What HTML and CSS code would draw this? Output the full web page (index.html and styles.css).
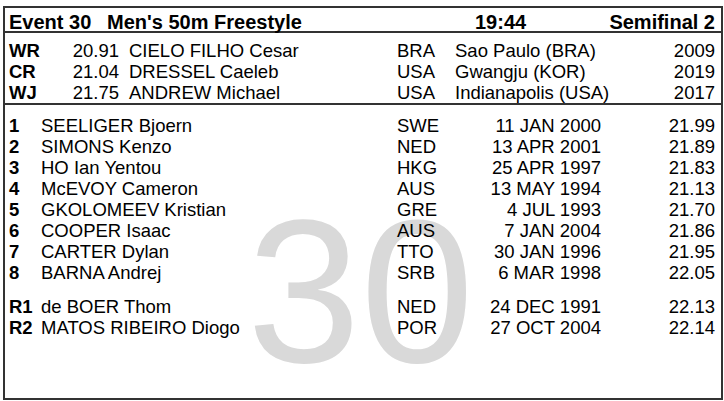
FILE: index.html
```html
<!DOCTYPE html>
<html>
<head>
<meta charset="utf-8">
<link rel="stylesheet" href="styles.css">
</head>
<body>
<div class="sheet">
  <div class="watermark">30</div>
  <div class="header">
    <div>Event 30</div>
    <div>Men's 50m Freestyle</div>
    <div>19:44</div>
    <div class="right">Semifinal 2</div>
  </div>
  <div class="records">
    <div class="rec"><b>WR</b><span class="right">20.91</span><span class="name">CIELO FILHO Cesar</span><span>BRA</span><span>Sao Paulo (BRA)</span><span class="right">2009</span></div>
    <div class="rec"><b>CR</b><span class="right">21.04</span><span class="name">DRESSEL Caeleb</span><span>USA</span><span>Gwangju (KOR)</span><span class="right">2019</span></div>
    <div class="rec"><b>WJ</b><span class="right">21.75</span><span class="name">ANDREW Michael</span><span>USA</span><span>Indianapolis (USA)</span><span class="right">2017</span></div>
  </div>
  <div class="results">
    <div class="res"><b>1</b><span>SEELIGER Bjoern</span><span>SWE</span><span class="right">11 JAN 2000</span><span class="right">21.99</span></div>
    <div class="res"><b>2</b><span>SIMONS Kenzo</span><span>NED</span><span class="right">13 APR 2001</span><span class="right">21.89</span></div>
    <div class="res"><b>3</b><span>HO Ian Yentou</span><span>HKG</span><span class="right">25 APR 1997</span><span class="right">21.83</span></div>
    <div class="res"><b>4</b><span>McEVOY Cameron</span><span>AUS</span><span class="right">13 MAY 1994</span><span class="right">21.13</span></div>
    <div class="res"><b>5</b><span>GKOLOMEEV Kristian</span><span>GRE</span><span class="right">4 JUL 1993</span><span class="right">21.70</span></div>
    <div class="res"><b>6</b><span>COOPER Isaac</span><span>AUS</span><span class="right">7 JAN 2004</span><span class="right">21.86</span></div>
    <div class="res"><b>7</b><span>CARTER Dylan</span><span>TTO</span><span class="right">30 JAN 1996</span><span class="right">21.95</span></div>
    <div class="res"><b>8</b><span>BARNA Andrej</span><span>SRB</span><span class="right">6 MAR 1998</span><span class="right">22.05</span></div>
    <div class="res reserve"><b>R1</b><span>de BOER Thom</span><span>NED</span><span class="right">24 DEC 1991</span><span class="right">22.13</span></div>
    <div class="res"><b>R2</b><span>MATOS RIBEIRO Diogo</span><span>POR</span><span class="right">27 OCT 2004</span><span class="right">22.14</span></div>
  </div>
</div>
</body>
</html>
```

FILE: styles.css
```css
html, body {
  margin: 0;
  padding: 0;
  background: #ffffff;
}
body {
  font-family: "Liberation Sans", Arial, sans-serif;
  color: #000;
}
.sheet {
  position: relative;
  box-sizing: border-box;
  margin: 6px 0 0 3px;
  width: 720px;
  height: 394px;
  border: 2px solid #333;
}
.watermark {
  position: absolute;
  left: 242px;
  top: 181px;
  font-size: 204px;
  line-height: 1;
  color: #d9d9d9;
  z-index: 0;
}
.header, .records, .results {
  position: relative;
  z-index: 1;
}
.header {
  display: grid;
  grid-template-columns: 98px 368px 1fr auto;
  padding: 3px 6px 0 4px;
  height: 25px;
  box-sizing: border-box;
  font-size: 20px;
  line-height: 22px;
  font-weight: bold;
  border-bottom: 2px solid #333;
}
.right {
  text-align: right;
}
.records {
  padding: 7px 6px 0 4px;
  height: 72px;
  box-sizing: border-box;
  border-bottom: 2px solid #333;
}
.rec {
  display: grid;
  grid-template-columns: 40px 70px 278px 58px 1fr auto;
  font-size: 18.5px;
  line-height: 21px;
  white-space: nowrap;
}
.rec .name {
  padding-left: 10px;
}
.results {
  padding: 10px 6px 0 4px;
}
.res {
  display: grid;
  grid-template-columns: 32px 356px 60px 144px 1fr;
  font-size: 18.5px;
  line-height: 21px;
  white-space: nowrap;
}
.res.reserve {
  margin-top: 13px;
}
```
